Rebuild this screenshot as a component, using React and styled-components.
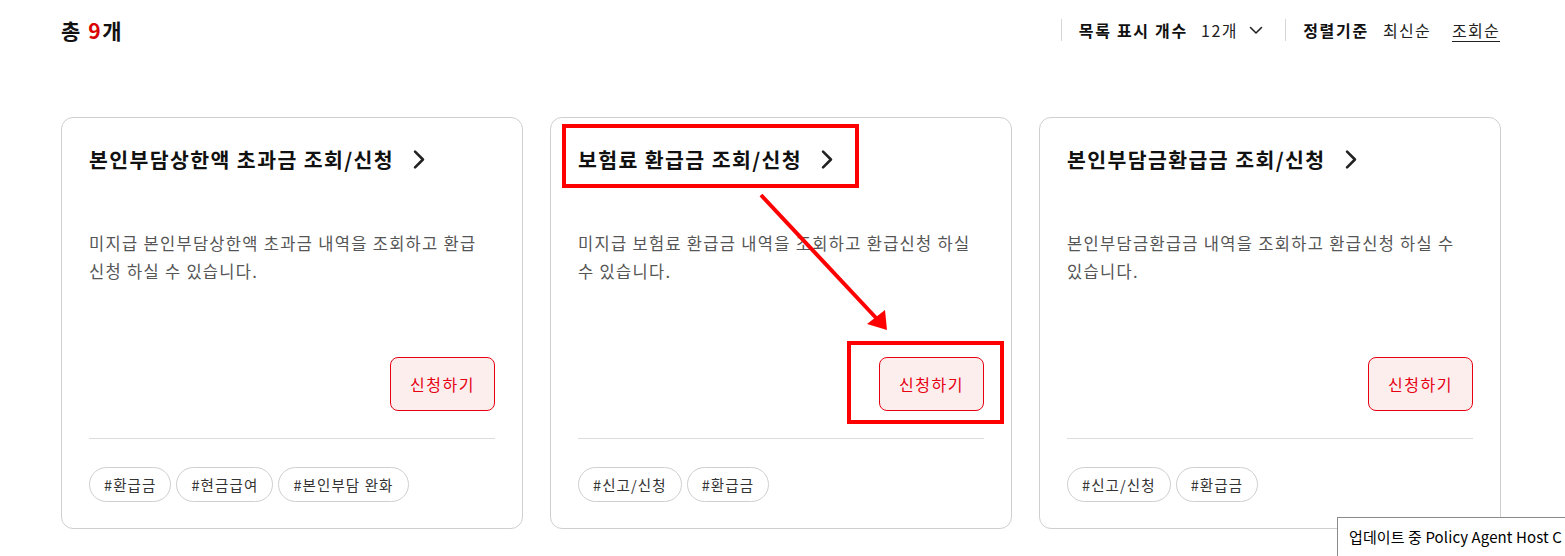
import React from "react";
import styled, { createGlobalStyle } from "styled-components";

const Global = createGlobalStyle`
  html, body { margin: 0; padding: 0; background: #fff; }
  body { font-family: "Noto Sans CJK KR", "Noto Sans", sans-serif; color: #111; }
  * { box-sizing: border-box; }
`;

const Page = styled.div`
  position: relative;
  width: 1565px;
  height: 556px;
  overflow: hidden;
  padding: 0 65px 0 61px;
`;

const TopBar = styled.div`
  height: 60px;
  display: flex;
  align-items: center;
  justify-content: space-between;
`;

const Total = styled.h2`
  margin: 0;
  font-size: 21px;
  font-weight: 700;
  letter-spacing: 1.6px;
  em { font-style: normal; color: #d90000; }
`;

const Controls = styled.div`
  display: flex;
  align-items: center;
  font-size: 16px;
`;

const VDivider = styled.span`
  width: 1px;
  height: 22px;
  background: #d6d6d6;
  margin: 0 ${(p) => p.$right || 17}px 0 ${(p) => p.$left || 0}px;
`;

const CtrlLabel = styled.span`
  font-weight: 700;
  color: #111;
  letter-spacing: 1.7px;
  margin-right: ${(p) => p.$mr || 14}px;
`;

const CtrlValue = styled.span`
  color: #222;
  letter-spacing: 1.6px;
  display: inline-flex;
  align-items: center;
  gap: 11px;
`;

const SortLink = styled.a`
  color: #222;
  letter-spacing: 1.3px;
  margin-left: ${(p) => p.$ml || 0}px;
  text-decoration: ${(p) => (p.$active ? "underline" : "none")};
  text-underline-offset: 4px;
  cursor: pointer;
`;

const Grid = styled.div`
  margin-top: 57px;
  display: grid;
  grid-template-columns: repeat(3, 462px);
  column-gap: 27px;
`;

const Card = styled.div`
  height: 412px;
  border: 1px solid #cfcfcf;
  border-radius: 12px;
  padding: 27px 27px 26px;
  display: flex;
  flex-direction: column;
`;

const Title = styled.h3`
  margin: 0;
  height: 28px;
  display: flex;
  align-items: center;
  gap: 18px;
  font-size: 20.5px;
  font-weight: 700;
  letter-spacing: 1.4px;
  color: #111;
`;

const Desc = styled.p`
  margin: 56px 0 0;
  flex: 1;
  font-size: 16.5px;
  line-height: 28px;
  color: #555;
  letter-spacing: 1.3px;
`;

const ApplyRow = styled.div`
  display: flex;
  justify-content: flex-end;
  padding-bottom: 27px;
  border-bottom: 1px solid #dcdcdc;
`;

const ApplyBtn = styled.button`
  width: 105px;
  height: 54px;
  border: 1px solid #e60012;
  border-radius: 8px;
  background: #fdeeee;
  color: #e60012;
  font-family: inherit;
  font-size: 16px;
  letter-spacing: 1.5px;
  cursor: pointer;
`;

const Tags = styled.div`
  display: flex;
  gap: 5px;
  margin-top: 28px;
`;

const Tag = styled.span`
  height: 35px;
  padding: 0 14px;
  border: 1px solid #cfcfcf;
  border-radius: 18px;
  display: inline-flex;
  align-items: center;
  font-size: 14.5px;
  letter-spacing: 1.1px;
  color: #333;
`;

const Overlay = styled.svg`
  position: absolute;
  left: 0;
  top: 0;
  pointer-events: none;
`;

const Tooltip = styled.div`
  position: absolute;
  left: 1337px;
  top: 517px;
  width: 228px;
  height: 39px;
  overflow: hidden;
  background: #fff;
  border: 1px solid #8a8a8a;
  border-right: none;
  border-bottom: none;
  padding: 8px 0 0 11px;
  font-size: 15px;
  letter-spacing: 0.1px;
  color: #000;
  white-space: nowrap;
`;

const Chevron = ({ size = 14, w = 2 }) => (
  <svg width={size} height={size * 1.5} viewBox="0 0 10 16" fill="none">
    <path d="M2 2l6 6-6 6" stroke="#222" strokeWidth={w} strokeLinecap="round" strokeLinejoin="round" />
  </svg>
);

const Down = () => (
  <svg width="14" height="9" viewBox="0 0 14 9" fill="none">
    <path d="M1.5 1.5l5.5 5.5 5.5-5.5" stroke="#222" strokeWidth="1.6" strokeLinecap="round" strokeLinejoin="round" />
  </svg>
);

const cards = [
  {
    title: "본인부담상한액 초과금 조회/신청",
    desc: "미지급 본인부담상한액 초과금 내역을 조회하고 환급 신청 하실 수 있습니다.",
    tags: ["#환급금", "#현금급여", "#본인부담 완화"],
  },
  {
    title: "보험료 환급금 조회/신청",
    desc: "미지급 보험료 환급금 내역을 조회하고 환급신청 하실 수 있습니다.",
    tags: ["#신고/신청", "#환급금"],
  },
  {
    title: "본인부담금환급금 조회/신청",
    desc: "본인부담금환급금 내역을 조회하고 환급신청 하실 수 있습니다.",
    tags: ["#신고/신청", "#환급금"],
  },
];

export default function App() {
  return (
    <>
      <Global />
      <Page>
        <TopBar>
          <Total>
            총 <em>9</em>개
          </Total>
          <Controls>
            <VDivider $right={17} />
            <CtrlLabel $mr={13}>목록 표시 개수</CtrlLabel>
            <CtrlValue>
              12개 <Down />
            </CtrlValue>
            <VDivider $left={22} $right={17} />
            <CtrlLabel $mr={14}>정렬기준</CtrlLabel>
            <SortLink>최신순</SortLink>
            <SortLink $ml={21} $active>
              조회순
            </SortLink>
          </Controls>
        </TopBar>
        <Grid>
          {cards.map((c) => (
            <Card key={c.title}>
              <Title>
                {c.title}
                <Chevron />
              </Title>
              <Desc>{c.desc}</Desc>
              <ApplyRow>
                <ApplyBtn>신청하기</ApplyBtn>
              </ApplyRow>
              <Tags>
                {c.tags.map((t) => (
                  <Tag key={t}>{t}</Tag>
                ))}
              </Tags>
            </Card>
          ))}
        </Grid>
        <Overlay width="1565" height="556" viewBox="0 0 1565 556">
          <rect x="564" y="126" width="293" height="60" fill="none" stroke="#ff0000" strokeWidth="4" />
          <rect x="849" y="343" width="153" height="79" fill="none" stroke="#ff0000" strokeWidth="4" />
          <line x1="761" y1="195" x2="878" y2="320" stroke="#ff0000" strokeWidth="4" />
          <polygon points="887,330 867,324 885,310" fill="#ff0000" />
        </Overlay>
        <Tooltip>업데이트 중 Policy Agent Host C</Tooltip>
      </Page>
    </>
  );
}
